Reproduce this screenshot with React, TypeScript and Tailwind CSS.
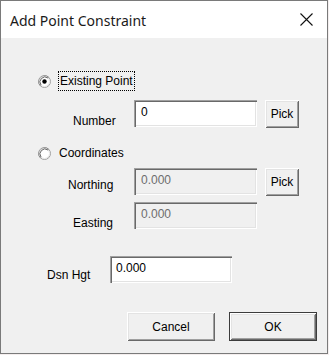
import React from "react";

const sunken =
  "shadow-[inset_1px_1px_0_#a0a0a0,inset_2px_2px_0_#696969,inset_-1px_-1px_0_#ffffff,inset_-2px_-2px_0_#e3e3e3]";
const raised =
  "shadow-[inset_1px_1px_0_#ffffff,inset_-1px_-1px_0_#696969,inset_2px_2px_0_#e3e3e3,inset_-2px_-2px_0_#a0a0a0]";

function Radio({ checked }: { checked?: boolean }) {
  return (
    <svg width="13" height="13" viewBox="0 0 13 13" className="shrink-0">
      <circle cx="6.5" cy="6.5" r="6" fill="#ffffff" stroke="#a0a0a0" />
      <path d="M2.3 10.7 A6 6 0 0 1 10.7 2.3" fill="none" stroke="#8a8a8a" />
      <circle cx="6.5" cy="6.5" r="5" fill="none" stroke="#e3e3e3" />
      <path d="M3 10 A5 5 0 0 1 10 3" fill="none" stroke="#696969" />
      {checked && <circle cx="6.5" cy="6.5" r="2.2" fill="#000000" />}
    </svg>
  );
}

function Field({ value, disabled, w, pl = "pl-[7px]" }: { value: string; disabled?: boolean; w: string; pl?: string }) {
  return (
    <div
      className={`${w} h-[27px] ${sunken} ${disabled ? "bg-[#f0f0f0] text-[#6d6d6d]" : "bg-white text-black"} ${pl} pt-[5px] leading-[14px]`}
    >
      {value}
    </div>
  );
}

function Btn({ label, w, h, def }: { label: string; w: string; h: string; def?: boolean }) {
  return (
    <div className={`${w} ${h} ${def ? "border border-[#3c3c3c]" : ""} shrink-0`}>
      <div className={`w-full h-full bg-[#f0f0f0] ${raised} flex items-center justify-center leading-[14px]`}>
        {label}
      </div>
    </div>
  );
}

export default function App() {
  return (
    <div className="w-[329px] h-[355px] bg-[#f4eeee] font-['Liberation_Sans',Arial,sans-serif] text-[12px] text-black">
      <div className="w-[328px] h-[354px] border border-[#7a7a7a] flex flex-col">
        <div className="h-[37px] bg-white flex items-center justify-between pl-[9px] pr-[14px] shrink-0">
          <span className="font-['Noto_Sans',sans-serif] text-[14px] text-[#1a1a1a] pt-[1px]">Add Point Constraint</span>
          <svg width="13" height="13" viewBox="0 0 13 13">
            <path d="M0.5 0.5 L12.5 12.5 M12.5 0.5 L0.5 12.5" stroke="#111111" strokeWidth="1.1" />
          </svg>
        </div>

        <div className="flex-1 bg-[#f0f0f0] flex flex-col">
          <div className="mt-[33px] h-[20px] flex items-center pl-[37px]">
            <Radio checked />
            <div className="ml-[7px] h-[20px] border border-dotted border-black px-[1px] flex items-center leading-[14px]">
              Existing Point
            </div>
          </div>

          <div className="mt-[9px] h-[28px] flex">
            <div className="w-[133px] pl-[72px] pt-[14px] leading-[14px]">Number</div>
            <Field value="0" w="w-[123px]" />
            <div className="ml-[8px]">
              <Btn label="Pick" w="w-[34px]" h="h-[28px]" />
            </div>
          </div>

          <div className="mt-[15px] h-[20px] flex items-center pl-[37px]">
            <Radio />
            <div className="ml-[8px] leading-[14px]">Coordinates</div>
          </div>

          <div className="mt-[5px] h-[28px] flex">
            <div className="w-[133px] pl-[67px] pt-[10px] leading-[14px]">Northing</div>
            <Field value="0.000" disabled w="w-[123px]" />
            <div className="ml-[8px]">
              <Btn label="Pick" w="w-[34px]" h="h-[28px]" />
            </div>
          </div>

          <div className="mt-[6px] h-[27px] flex">
            <div className="w-[133px] pl-[72px] pt-[14px] leading-[14px]">Easting</div>
            <Field value="0.000" disabled w="w-[123px]" />
          </div>

          <div className="mt-[27px] h-[27px] flex">
            <div className="w-[109px] pl-[46px] pt-[12px] leading-[14px]">Dsn Hgt</div>
            <Field value="0.000" w="w-[122px]" pl="pl-[6px]" />
          </div>

          <div className="mt-[29px] h-[29px] flex pl-[126px] gap-[14px]">
            <Btn label="Cancel" w="w-[88px]" h="h-[29px]" />
            <Btn label="OK" w="w-[88px]" h="h-[29px]" def />
          </div>
        </div>
      </div>
    </div>
  );
}
